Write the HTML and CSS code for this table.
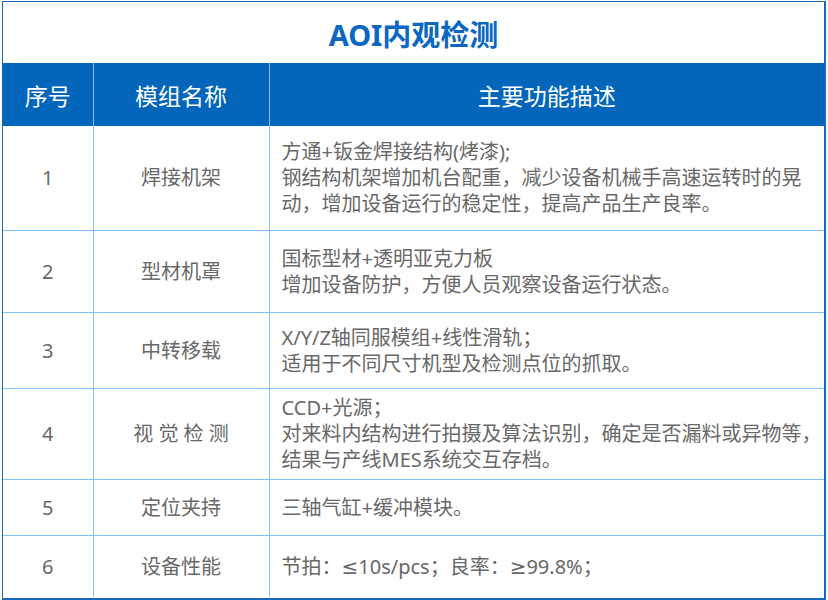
FILE: index.html
```html
<!DOCTYPE html>
<html lang="zh-CN">
<head>
<meta charset="utf-8">
<title>AOI内观检测</title>
<link rel="stylesheet" href="styles.css">
</head>
<body>
<div class="sheet">
  <div class="title">AOI内观检测</div>
  <table class="spec">
    <colgroup>
      <col class="c-no">
      <col class="c-name">
      <col class="c-desc">
    </colgroup>
    <thead>
      <tr class="head">
        <th>序号</th>
        <th>模组名称</th>
        <th>主要功能描述</th>
      </tr>
    </thead>
    <tbody>
      <tr class="r1">
        <td class="no">1</td>
        <td class="name">焊接机架</td>
        <td class="desc">方通+钣金焊接结构(烤漆);<br>钢结构机架增加机台配重，减少设备机械手高速运转时的晃动，增加设备运行的稳定性，提高产品生产良率。</td>
      </tr>
      <tr class="r2">
        <td class="no">2</td>
        <td class="name">型材机罩</td>
        <td class="desc">国标型材+透明亚克力板<br>增加设备防护，方便人员观察设备运行状态。</td>
      </tr>
      <tr class="r3">
        <td class="no">3</td>
        <td class="name">中转移载</td>
        <td class="desc">X/Y/Z轴同服模组+线性滑轨；<br>适用于不同尺寸机型及检测点位的抓取。</td>
      </tr>
      <tr class="r4">
        <td class="no">4</td>
        <td class="name">视 觉 检 测</td>
        <td class="desc">CCD+光源；<br>对来料内结构进行拍摄及算法识别，确定是否漏料或异物等，结果与产线MES系统交互存档。</td>
      </tr>
      <tr class="r5">
        <td class="no">5</td>
        <td class="name">定位夹持</td>
        <td class="desc">三轴气缸+缓冲模块。</td>
      </tr>
      <tr class="r6">
        <td class="no">6</td>
        <td class="name">设备性能</td>
        <td class="desc">节拍：≤10s/pcs；良率：≥99.8%；</td>
      </tr>
    </tbody>
  </table>
</div>
</body>
</html>
```

FILE: styles.css
```css
html, body {
  margin: 0;
  padding: 0;
  background: #ffffff;
}

body {
  font-family: "Noto Sans", "DejaVu Sans", "Noto Sans CJK SC", sans-serif;
}

.sheet {
  width: 824px;
  height: 599px;
  margin: 1px 0 0 2px;
  border: 1px solid #1769bd;
  border-bottom-width: 2px;
  border-right-width: 2px;
  box-sizing: border-box;
  display: flex;
  flex-direction: column;
  overflow: hidden;
}

.title {
  height: 61px;
  flex: none;
  display: flex;
  align-items: center;
  justify-content: center;
  color: #0b67c2;
  font-size: 29px;
  font-weight: 700;
}

.spec {
  width: 100%;
  border-collapse: collapse;
  table-layout: fixed;
}

.c-no { width: 90px; }
.c-name { width: 176px; }

.head th {
  height: 63px;
  padding: 0;
  background: #0466ba;
  color: #ffffff;
  font-size: 23px;
  font-weight: 400;
  border-left: 1px solid #7fc2f6;
  vertical-align: middle;
  text-align: center;
}

.head th:first-child {
  border-left: none;
}

.spec td {
  padding: 0;
  color: #686868;
  font-size: 20px;
  line-height: 26px;
  border: 1px solid #7ec3ff;
  vertical-align: middle;
}

.spec td:first-child {
  border-left: none;
}

.spec td:last-child {
  border-right: none;
}

.spec tbody tr:first-child td {
  border-top: none;
}

.spec tbody tr:last-child td {
  border-bottom: none;
}

.no,
.name {
  text-align: center;
}

.spec td.desc {
  padding: 0 2px 0 12px;
  text-align: left;
}

.r1 td { height: 104px; }
.r2 td { height: 81px; }
.r3 td { height: 75px; }
.r4 td { height: 90px; }
.r5 td { height: 55px; }
.r6 td { height: 61px; }
```
